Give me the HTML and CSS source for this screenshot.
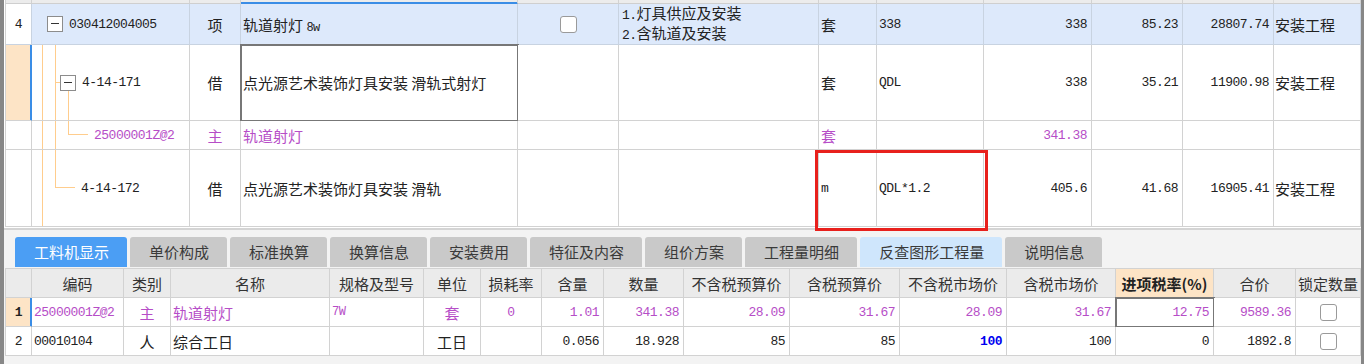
FILE: index.html
```html
<!DOCTYPE html>
<html lang="zh">
<head>
    <meta charset="UTF-8">
    <meta name="viewport" content="width=device-width, initial-scale=1.0">
    <title>清单定额</title>
    <link rel="stylesheet" href="styles.css">
</head>
<body>
    <div class="frame">
        <div class="top-panel">
            <div class="grid top">
                <div class="row stub">
                    <div class="cell"></div><div class="cell"></div><div class="cell"></div>
                    <div class="cell focus-col"></div><div class="cell"></div><div class="cell"></div>
                    <div class="cell"></div><div class="cell"></div><div class="cell"></div>
                    <div class="cell"></div><div class="cell"></div><div class="cell"></div>
                </div>

                <div class="row r1 hl">
                    <div class="cell num-col"><span class="n">4</span></div>
                    <div class="cell code t1"><span class="fold"></span><span class="n">030412004005</span></div>
                    <div class="cell mid">项</div>
                    <div class="cell"><span>轨道射灯 <span class="n small">8w</span></span></div>
                    <div class="cell mid"><span class="check"></span></div>
                    <div class="cell lines">
                        <div><span class="n">1.</span>灯具供应及安装</div>
                        <div><span class="n">2.</span>含轨道及安装</div>
                    </div>
                    <div class="cell">套</div>
                    <div class="cell"><span class="n">338</span></div>
                    <div class="cell right"><span class="n">338</span></div>
                    <div class="cell right"><span class="n">85.23</span></div>
                    <div class="cell right"><span class="n">28807.74</span></div>
                    <div class="cell tail">安装工程</div>
                </div>

                <div class="row r2">
                    <div class="cell num-col current"></div>
                    <div class="cell code t2"><span class="fold"></span><span class="n">4-14-171</span></div>
                    <div class="cell mid">借</div>
                    <div class="cell selected">点光源艺术装饰灯具安装 滑轨式射灯</div>
                    <div class="cell"></div>
                    <div class="cell"></div>
                    <div class="cell">套</div>
                    <div class="cell"><span class="n">QDL</span></div>
                    <div class="cell right"><span class="n">338</span></div>
                    <div class="cell right"><span class="n">35.21</span></div>
                    <div class="cell right"><span class="n">11900.98</span></div>
                    <div class="cell tail">安装工程</div>
                </div>

                <div class="row r3 main">
                    <div class="cell num-col"></div>
                    <div class="cell code t3"><span class="n">25000001Z@2</span></div>
                    <div class="cell mid">主</div>
                    <div class="cell">轨道射灯</div>
                    <div class="cell"></div>
                    <div class="cell"></div>
                    <div class="cell">套</div>
                    <div class="cell"></div>
                    <div class="cell right"><span class="n">341.38</span></div>
                    <div class="cell"></div>
                    <div class="cell"></div>
                    <div class="cell"></div>
                </div>

                <div class="row r4">
                    <div class="cell num-col"></div>
                    <div class="cell code t4"><span class="n">4-14-172</span></div>
                    <div class="cell mid">借</div>
                    <div class="cell">点光源艺术装饰灯具安装 滑轨</div>
                    <div class="cell"></div>
                    <div class="cell"></div>
                    <div class="cell"><span class="n">m</span></div>
                    <div class="cell"><span class="n">QDL*1.2</span></div>
                    <div class="cell right"><span class="n">405.6</span></div>
                    <div class="cell right"><span class="n">41.68</span></div>
                    <div class="cell right"><span class="n">16905.41</span></div>
                    <div class="cell tail">安装工程</div>
                </div>
            </div>
        </div>

        <div class="splitter"></div>

        <div class="bottom-panel">
            <div class="tabs">
                <div class="tab active">工料机显示</div>
                <div class="tab">单价构成</div>
                <div class="tab">标准换算</div>
                <div class="tab">换算信息</div>
                <div class="tab">安装费用</div>
                <div class="tab">特征及内容</div>
                <div class="tab">组价方案</div>
                <div class="tab">工程量明细</div>
                <div class="tab soft">反查图形工程量</div>
                <div class="tab">说明信息</div>
            </div>

            <div class="grid bottom">
                <div class="row head">
                    <div class="cell"></div>
                    <div class="cell">编码</div>
                    <div class="cell">类别</div>
                    <div class="cell">名称</div>
                    <div class="cell">规格及型号</div>
                    <div class="cell">单位</div>
                    <div class="cell">损耗率</div>
                    <div class="cell">含量</div>
                    <div class="cell">数量</div>
                    <div class="cell">不含税预算价</div>
                    <div class="cell">含税预算价</div>
                    <div class="cell">不含税市场价</div>
                    <div class="cell">含税市场价</div>
                    <div class="cell active-head">进项税率(%)</div>
                    <div class="cell">合价</div>
                    <div class="cell">锁定数量</div>
                </div>

                <div class="row main">
                    <div class="cell num-col current"><span class="n bold">1</span></div>
                    <div class="cell"><span class="n">25000001Z@2</span></div>
                    <div class="cell mid">主</div>
                    <div class="cell">轨道射灯</div>
                    <div class="cell"><span class="n small">7W</span></div>
                    <div class="cell mid">套</div>
                    <div class="cell mid"><span class="n">0</span></div>
                    <div class="cell right"><span class="n">1.01</span></div>
                    <div class="cell right"><span class="n">341.38</span></div>
                    <div class="cell right"><span class="n">28.09</span></div>
                    <div class="cell right"><span class="n">31.67</span></div>
                    <div class="cell right"><span class="n">28.09</span></div>
                    <div class="cell right"><span class="n">31.67</span></div>
                    <div class="cell right selected"><span class="n">12.75</span></div>
                    <div class="cell right"><span class="n">9589.36</span></div>
                    <div class="cell mid"><span class="check"></span></div>
                </div>

                <div class="row">
                    <div class="cell num-col"><span class="n">2</span></div>
                    <div class="cell"><span class="n">00010104</span></div>
                    <div class="cell mid">人</div>
                    <div class="cell">综合工日</div>
                    <div class="cell"></div>
                    <div class="cell mid">工日</div>
                    <div class="cell"></div>
                    <div class="cell right"><span class="n">0.056</span></div>
                    <div class="cell right"><span class="n">18.928</span></div>
                    <div class="cell right"><span class="n">85</span></div>
                    <div class="cell right"><span class="n">85</span></div>
                    <div class="cell right"><span class="n blue">100</span></div>
                    <div class="cell right"><span class="n">100</span></div>
                    <div class="cell right"><span class="n">0</span></div>
                    <div class="cell right"><span class="n">1892.8</span></div>
                    <div class="cell mid"><span class="check"></span></div>
                </div>
            </div>
        </div>

        <div class="mark"></div>
    </div>
</body>
</html>
```

FILE: styles.css
```css
* {
    margin: 0;
    padding: 0;
    box-sizing: border-box;
}

body {
    font-family: "Noto Sans CJK SC", "Noto Sans", sans-serif;
    font-size: 15px;
    color: #222;
    background: #f3f3f3;
}

.frame {
    position: relative;
    height: 364px;
    border-left: 4px solid #878787;
    border-right: 3px solid #878787;
    background: #f3f3f3;
    overflow: hidden;
}

.top-panel {
    height: 228px;
    background: #fff;
}

.splitter {
    height: 2px;
    background: #d4d4d4;
}

/* grids */
.grid {
    margin-left: 1px;
    border-left: 1px solid #d2d2d2;
}

.row {
    display: grid;
}

.top .row {
    grid-template-columns: 26px 158px 51px 277px 101px 200px 58px 107px 108px 91px 91px 87px;
}

.bottom .row {
    grid-template-columns: 26px 92px 47px 159px 94px 57px 61px 62px 80px 106px 110px 107px 109px 98px 82px 65px;
    height: 29px;
}

.cell {
    display: flex;
    align-items: center;
    padding: 0 2px;
    border-right: 1px solid #d2d2d2;
    border-bottom: 1px solid #d2d2d2;
    white-space: nowrap;
    overflow: hidden;
    background: #fff;
}

.cell.mid {
    justify-content: center;
}

.cell.right {
    justify-content: flex-end;
    padding-right: 4px;
}

.n {
    font-family: "Liberation Mono", monospace;
    font-size: 13px;
    letter-spacing: -0.5px;
}

.n.small {
    font-size: 12px;
}

.n.bold {
    font-weight: bold;
}

.n.blue {
    color: #0000f0;
    font-weight: bold;
}

.num-col {
    justify-content: center;
}

.num-col.current {
    background: #fde4c6;
    border-right-color: #3a8de6;
    box-shadow: inset -1px 0 0 #3a8de6;
}

/* top grid rows */
.stub {
    height: 4px;
}

.stub .cell {
    background: #ececec;
    border-bottom-color: #cfcfcf;
}

.stub .focus-col {
    border-bottom-color: #3a8de6;
    box-shadow: inset 0 -1px 0 #3a8de6;
}

.r1 { height: 41px; }
.r2 { height: 76px; }
.r3 { height: 29px; }
.r4 { height: 77px; }

.hl .cell {
    background: #dde9fb;
    border-color: #c8d3e1;
}

.hl .num-col {
    background: #fff;
}

.lines {
    flex-direction: column;
    align-items: flex-start;
    justify-content: center;
    line-height: 17px;
    padding-left: 3px;
    overflow: visible;
}

.tail {
    padding-left: 1px;
}

.selected {
    outline: 2px solid #777;
    outline-offset: -1px;
}

.main .cell {
    color: #b64dc7;
}

.main .num-col {
    color: #222;
}

/* tree connectors */
.code {
    --tree: #ffcd8d;
}

.t1 {
    padding-left: 15px;
    background:
        linear-gradient(var(--tree), var(--tree)) 10px 0 / 1px 100% no-repeat,
        linear-gradient(var(--tree), var(--tree)) 10px 19px / 5px 1px no-repeat,
        linear-gradient(var(--tree), var(--tree)) 23px 27px / 1px 14px no-repeat,
        #dde9fb;
}

.t2 {
    padding-left: 28px;
    background:
        linear-gradient(var(--tree), var(--tree)) 10px 0 / 1px 100% no-repeat,
        linear-gradient(var(--tree), var(--tree)) 23px 0 / 1px 100% no-repeat,
        linear-gradient(var(--tree), var(--tree)) 23px 37px / 5px 1px no-repeat,
        linear-gradient(var(--tree), var(--tree)) 36px 45px / 1px 31px no-repeat,
        #fff;
}

.t3 {
    padding-left: 62px;
    background:
        linear-gradient(var(--tree), var(--tree)) 10px 0 / 1px 100% no-repeat,
        linear-gradient(var(--tree), var(--tree)) 23px 0 / 1px 100% no-repeat,
        linear-gradient(var(--tree), var(--tree)) 36px 0 / 1px 14px no-repeat,
        linear-gradient(var(--tree), var(--tree)) 36px 13px / 20px 1px no-repeat,
        #fff;
}

.t4 {
    padding-left: 49px;
    background:
        linear-gradient(var(--tree), var(--tree)) 10px 0 / 1px 100% no-repeat,
        linear-gradient(var(--tree), var(--tree)) 23px 0 / 1px 38px no-repeat,
        linear-gradient(var(--tree), var(--tree)) 23px 37px / 20px 1px no-repeat,
        #fff;
}

.fold {
    position: relative;
    width: 16px;
    height: 16px;
    margin-right: 6px;
    border: 1px solid #8c8c8c;
    background: #fff;
    flex: none;
}

.fold::after {
    content: "";
    position: absolute;
    left: 3px;
    right: 3px;
    top: 6px;
    height: 1px;
    background: #333;
}

.check {
    display: block;
    width: 17px;
    height: 17px;
    border: 1px solid #9a9a9a;
    border-radius: 3px;
    background: #fff;
}

/* bottom panel */
.bottom-panel {
    padding-top: 7px;
}

.tabs {
    display: flex;
    gap: 3px;
    margin-left: 11px;
    margin-bottom: 1px;
}

.tab {
    height: 30px;
    padding: 0 18px 0 19px;
    line-height: 30px;
    background: #c9c9c9;
    color: #3a3a3a;
    border-radius: 3px 3px 0 0;
}

.tab.active {
    background: #4b9ef4;
    color: #fff;
}

.tab.soft {
    background: #cfe6fc;
}

.bottom {
    border-top: 1px solid #d2d2d2;
}

.head .cell {
    justify-content: center;
    background: #ebebeb;
    color: #333;
}

.head .active-head {
    background: #fde4c6;
    font-weight: bold;
    color: #222;
    border-bottom-color: #3a8de6;
}

.mark {
    position: absolute;
    left: 811px;
    top: 150px;
    width: 173px;
    height: 81px;
    border: 3px solid #e8201c;
}
```
